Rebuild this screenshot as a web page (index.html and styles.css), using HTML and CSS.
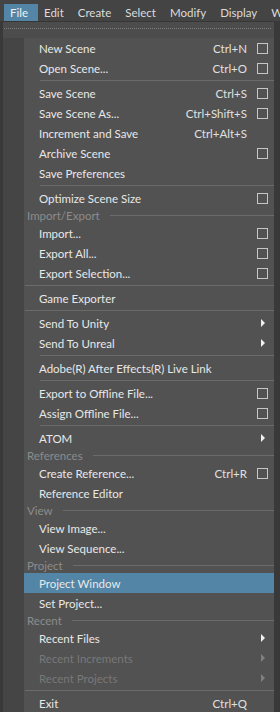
FILE: index.html
```html
<!DOCTYPE html>
<html lang="en">
<head>
    <meta charset="UTF-8">
    <meta name="viewport" content="width=device-width, initial-scale=1.0">
    <title>File menu</title>
    <link rel="stylesheet" href="styles.css">
</head>
<body>
    <!-- menu bar -->
    <div class="menubar">
        <span class="bar-item active">File</span>
        <span class="bar-item">Edit</span>
        <span class="bar-item">Create</span>
        <span class="bar-item">Select</span>
        <span class="bar-item">Modify</span>
        <span class="bar-item">Display</span>
        <span class="bar-item">W</span>
    </div>

    <!-- file menu -->
    <div class="menu">
        <div class="tearoff"><div class="dots"></div></div>
        <div class="items">
            <div class="item"><span class="text">New Scene</span><span class="key">Ctrl+N</span><span class="box check"></span></div>
            <div class="item"><span class="text">Open Scene...</span><span class="key">Ctrl+O</span><span class="box check"></span></div>
            <div class="sep"></div>
            <div class="item"><span class="text">Save Scene</span><span class="key">Ctrl+S</span><span class="box check"></span></div>
            <div class="item"><span class="text">Save Scene As...</span><span class="key">Ctrl+Shift+S</span><span class="box check"></span></div>
            <div class="item"><span class="text">Increment and Save</span><span class="key">Ctrl+Alt+S</span><span class="box"></span></div>
            <div class="item"><span class="text">Archive Scene</span><span class="box check"></span></div>
            <div class="item"><span class="text">Save Preferences</span><span class="box"></span></div>
            <div class="sep"></div>
            <div class="item"><span class="text">Optimize Scene Size</span><span class="box check"></span></div>
            <div class="section"><span>Import/Export</span></div>
            <div class="item"><span class="text">Import...</span><span class="box check"></span></div>
            <div class="item"><span class="text">Export All...</span><span class="box check"></span></div>
            <div class="item"><span class="text">Export Selection...</span><span class="box check"></span></div>
            <div class="sep long"></div>
            <div class="item"><span class="text">Game Exporter</span><span class="box"></span></div>
            <div class="sep long"></div>
            <div class="item"><span class="text">Send To Unity</span><span class="box arrow"></span></div>
            <div class="item"><span class="text">Send To Unreal</span><span class="box arrow"></span></div>
            <div class="sep"></div>
            <div class="item"><span class="text">Adobe(R) After Effects(R) Live Link</span><span class="box"></span></div>
            <div class="sep"></div>
            <div class="item"><span class="text">Export to Offline File...</span><span class="box check"></span></div>
            <div class="item"><span class="text">Assign Offline File...</span><span class="box check"></span></div>
            <div class="sep"></div>
            <div class="item"><span class="text">ATOM</span><span class="box arrow"></span></div>
            <div class="section"><span>References</span></div>
            <div class="item"><span class="text">Create Reference...</span><span class="key">Ctrl+R</span><span class="box check"></span></div>
            <div class="item"><span class="text">Reference Editor</span><span class="box"></span></div>
            <div class="section"><span>View</span></div>
            <div class="item"><span class="text">View Image...</span><span class="box"></span></div>
            <div class="item"><span class="text">View Sequence...</span><span class="box"></span></div>
            <div class="section"><span>Project</span></div>
            <div class="item hover"><span class="text">Project Window</span><span class="box"></span></div>
            <div class="item"><span class="text">Set Project...</span><span class="box"></span></div>
            <div class="section"><span>Recent</span></div>
            <div class="item"><span class="text">Recent Files</span><span class="box arrow"></span></div>
            <div class="item disabled"><span class="text">Recent Increments</span><span class="box arrow"></span></div>
            <div class="item disabled"><span class="text">Recent Projects</span><span class="box arrow"></span></div>
            <div class="sep long"></div>
            <div class="item"><span class="text">Exit</span><span class="key">Ctrl+Q</span><span class="box"></span></div>
        </div>
    </div>
</body>
</html>
```

FILE: styles.css
```css
body {
    margin: 0;
    padding: 0;
    background-color: #393939;
    color: #e8e8e8;
    font-family: Lato, "Liberation Sans", sans-serif;
    font-size: 11.5px;
    overflow: hidden;
}

.menubar {
    display: flex;
    height: 21px;
    align-items: flex-end;
    background-color: #444444;
    padding-left: 4px;
    white-space: nowrap;
}

.bar-item {
    height: 17px;
    line-height: 17px;
    padding: 0 8px 0 5px;
    margin-right: 1px;
    color: #dcdcdc;
}

    .bar-item.active {
        padding: 0 10px 0 6px;
        background-color: #5285a6;
        color: #f0f0f0;
    }

.menu {
    margin-left: 3px;
    width: 271px;
    border-top: 1px solid #363636;
    background-color: #4c4c4c;
}

.tearoff {
    height: 16px;
    padding: 6px 2px 0 1px;
    box-sizing: border-box;
}

.dots {
    height: 1px;
    background-image: linear-gradient(to right, #7c7c7c 50%, transparent 50%);
    background-size: 2px 1px;
}

.items {
    border-left: 21px solid #454545;
    background-color: #525252;
}

.item {
    display: flex;
    align-items: center;
    height: 20px;
    padding: 0 6px 0 15px;
}

    .item .text {
        flex: 1;
        white-space: nowrap;
    }

    .item .key {
        margin-right: 10px;
        color: #e0e0e0;
    }

    .item.hover {
        background-color: #5285a6;
    }

    .item.disabled {
        color: #787878;
    }

.box {
    width: 11px;
    height: 11px;
    box-sizing: border-box;
    display: flex;
    justify-content: center;
    align-items: center;
}

    .box.check {
        border: 1px solid #c6c6c6;
    }

    .box.arrow::after {
        content: "";
        border-left: 4px solid #f0f0f0;
        border-top: 4px solid transparent;
        border-bottom: 4px solid transparent;
    }

.disabled .box.arrow::after {
    border-left-color: #808080;
}

.sep {
    height: 5px;
    padding-left: 16px;
    display: flex;
    align-items: center;
}

    .sep::after {
        content: "";
        flex: 1;
        height: 1px;
        background-color: #6b6b6b;
    }

    .sep.long {
        padding-left: 1px;
    }

.section {
    display: flex;
    align-items: center;
    gap: 10px;
    height: 15px;
    padding-left: 3px;
    color: #8c8c8c;
}

    .section::after {
        content: "";
        flex: 1;
        height: 1px;
        background-color: #6b6b6b;
    }
```
